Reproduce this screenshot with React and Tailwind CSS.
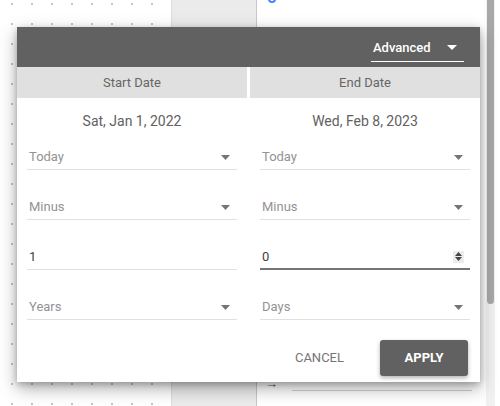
import React from "react";

const font = { fontFamily: "Roboto, 'Liberation Sans', sans-serif" };

function Caret({ className = "", w = 10, h = 5 }) {
  return (
    <svg width={w} height={h} viewBox={`0 0 ${w} ${h}`} className={className}>
      <path d={`M0 0h${w}L${w / 2} ${h}z`} fill="currentColor" />
    </svg>
  );
}

function SelectField({ label }) {
  return (
    <div className="flex items-center justify-between h-[25px] border-b border-[#e0e0e0] pl-[2px] pr-[7px]">
      <span className="text-[13px] text-[#939393]">{label}</span>
      <Caret w={9} h={5} className="text-[#757575]" />
    </div>
  );
}

function NumberField({ value, focused }) {
  return (
    <div
      className={
        focused
          ? "flex items-center justify-between h-[25px] border-b-2 border-[#757575] pl-[2px] pr-[6px]"
          : "flex items-center justify-between h-[25px] border-b border-[#e0e0e0] pl-[2px]"
      }
    >
      <span className="text-[13px] text-[#424242]">{value}</span>
      {focused && (
        <span className="w-[11px] h-[12px] bg-[#ececec] flex flex-col items-center justify-center gap-[1px]">
          <svg width="7" height="4" viewBox="0 0 7 4"><path d="M0 4h7L3.5 0z" fill="#444" /></svg>
          <svg width="7" height="4" viewBox="0 0 7 4"><path d="M0 0h7L3.5 4z" fill="#444" /></svg>
        </span>
      )}
    </div>
  );
}

function Column({ date, unit, value, focused }) {
  return (
    <div className="flex-1 px-[10px]">
      <div className="h-[47px] flex items-center justify-center text-[14px] text-[#616161]">{date}</div>
      <div className="flex flex-col gap-[25px]">
        <SelectField label="Today" />
        <SelectField label="Minus" />
        <NumberField value={value} focused={focused} />
        <SelectField label={unit} />
      </div>
    </div>
  );
}

export default function App() {
  return (
    <div className="relative w-[500px] h-[406px] overflow-hidden bg-white" style={font}>
      {/* page behind the dialog */}
      <div className="flex h-full">
        <div className="w-[171px] h-full bg-[radial-gradient(circle,#c4c4c4_0.9px,transparent_1.2px)] bg-[length:20px_20px] bg-[position:2px_-6px]" />
        <div className="w-[86px] h-full bg-[#ebebeb] border-l border-[#dcdcdc] border-r border-r-[#c6c6cc]" />
        <div className="w-[229px] h-full relative">
          <div className="absolute left-[11px] -top-[5px] w-[8px] h-[8px] rounded-full border-2 border-[#4285f4]" />
          <div className="absolute left-[8px] top-[377px] text-[#555] text-[13px] leading-none">→</div>
          <div className="absolute left-[35px] right-[14px] top-[390px] border-t border-[#cfcfcf]" />
        </div>
        <div className="w-[9px] h-full bg-[#f1f1f1] flex flex-col">
          <div className="h-[304px] mx-[1px] bg-[#a8a8a8] rounded-b-[4px]" />
        </div>
      </div>

      {/* dialog */}
      <div className="absolute left-[17px] top-[27px] w-[463px] bg-white shadow-[0_6px_16px_rgba(0,0,0,0.35),0_2px_6px_rgba(0,0,0,0.2)] flex flex-col">
        <div className="h-[40px] shrink-0 bg-[#616161] flex items-start justify-end pr-[16px]">
          <div className="mt-[11px] w-[93px] h-[24px] pb-[4px] border-b border-white flex items-center justify-between pl-[2px] pr-[7px]">
            <span className="text-[13px] font-medium text-white">Advanced</span>
            <Caret className="text-white" />
          </div>
        </div>
        <div className="flex gap-[3px] h-[31px] shrink-0">
          <div className="flex-1 bg-[#e0e0e0] flex items-center justify-center text-[13px] text-[#666]">Start Date</div>
          <div className="flex-1 bg-[#e0e0e0] flex items-center justify-center text-[13px] text-[#666]">End Date</div>
        </div>
        <div className="flex gap-[3px]">
          <Column date="Sat, Jan 1, 2022" unit="Years" value="1" />
          <Column date="Wed, Feb 8, 2023" unit="Days" value="0" focused />
        </div>
        <div className="flex justify-end items-center gap-[20px] pr-[12px] mt-[20px] mb-[6px]">
          <button className="text-[13px] text-[#757575] px-[16px] h-[36px]">CANCEL</button>
          <button className="w-[88px] h-[36px] rounded-[3px] bg-[#616161] text-white text-[13px] font-bold shadow-[0_2px_4px_rgba(0,0,0,0.3)]">
            APPLY
          </button>
        </div>
      </div>
    </div>
  );
}
